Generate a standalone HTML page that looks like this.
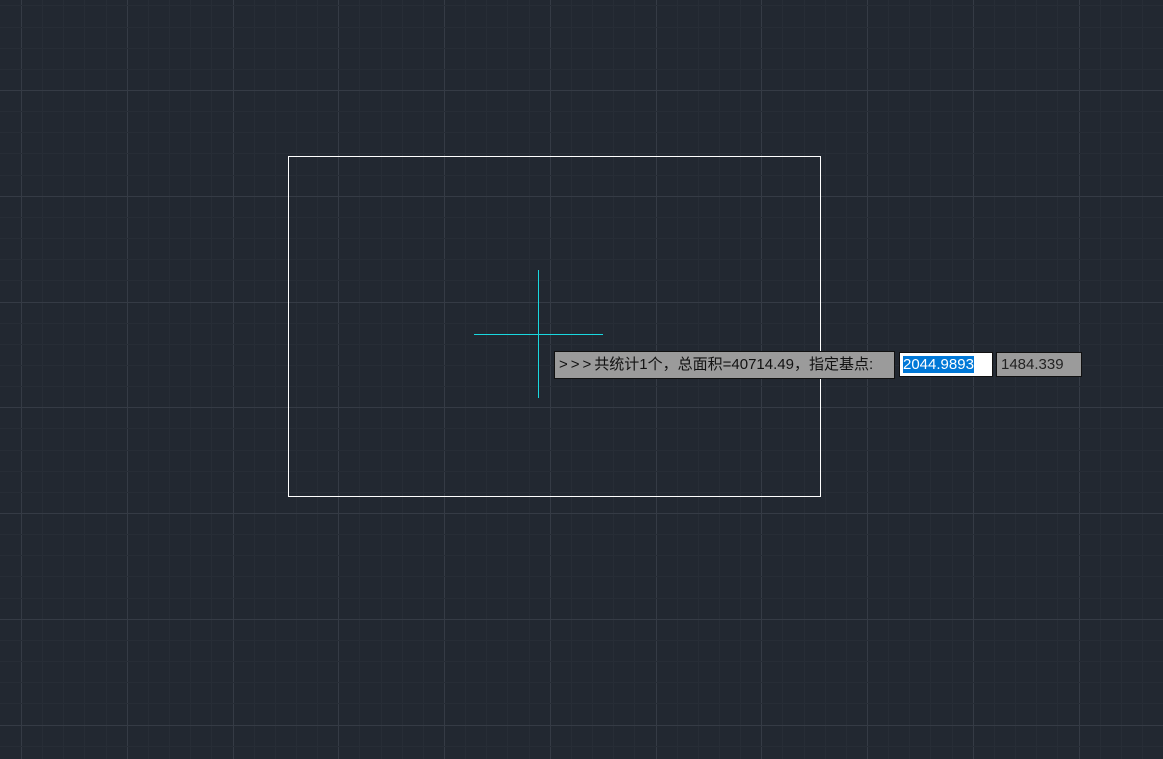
<!DOCTYPE html>
<html><head><meta charset="utf-8"><style>
html,body{margin:0;padding:0;width:1163px;height:759px;overflow:hidden;background:#222831}
.box{position:absolute;font-family:"Liberation Sans","Noto Sans CJK SC",sans-serif;font-size:15px;line-height:25px;color:#111;box-sizing:border-box;border:1px solid #111;white-space:nowrap}
</style></head><body>
<svg width="1163" height="759" style="position:absolute;left:0;top:0" id="g"></svg>
<script>
var s='';
for(var i=-1;i<60;i++){var x=21+21.15*i;if(x<0||x>1163)continue;var m=((i%5)+5)%5==0;
s+='<line x1="'+(Math.round(x)+.5)+'" y1="0" x2="'+(Math.round(x)+.5)+'" y2="759" stroke="'+(m?'#353b45':'#272d36')+'" stroke-width="1"/>';}
for(var i=-5;i<40;i++){var y=90+21.15*i;if(y<0||y>759)continue;var m=((i%5)+5)%5==0;
s+='<line x1="0" y1="'+(Math.round(y)+.5)+'" x2="1163" y2="'+(Math.round(y)+.5)+'" stroke="'+(m?'#353b45':'#272d36')+'" stroke-width="1"/>';}
s+='<rect x="288.5" y="156.5" width="532" height="340" fill="none" stroke="#ffffff" stroke-width="1"/>';
s+='<line x1="538.5" y1="270" x2="538.5" y2="398" stroke="#19d8e0"/>';
s+='<line x1="474" y1="334.5" x2="603" y2="334.5" stroke="#19d8e0"/>';
document.getElementById('g').innerHTML=s;
</script>
<div class="box" style="left:554px;top:351px;width:341px;height:28px;background:#9b9b9b;padding-left:4px"><span style="letter-spacing:3px">&gt;&gt;&gt;</span>共统计1个，总面积=40714.49，指定基点:</div>
<div class="box" style="left:899px;top:352px;width:94px;height:25px;background:#fff;padding-left:3px;line-height:23px;font-size:15px"><span style="background:#0078d7;color:#fff">2044.9893</span></div>
<div class="box" style="left:996px;top:352px;width:86px;height:25px;background:#9b9b9b;padding-left:4px;line-height:23px;font-size:15px;color:#222">1484.339</div>
</body></html>
